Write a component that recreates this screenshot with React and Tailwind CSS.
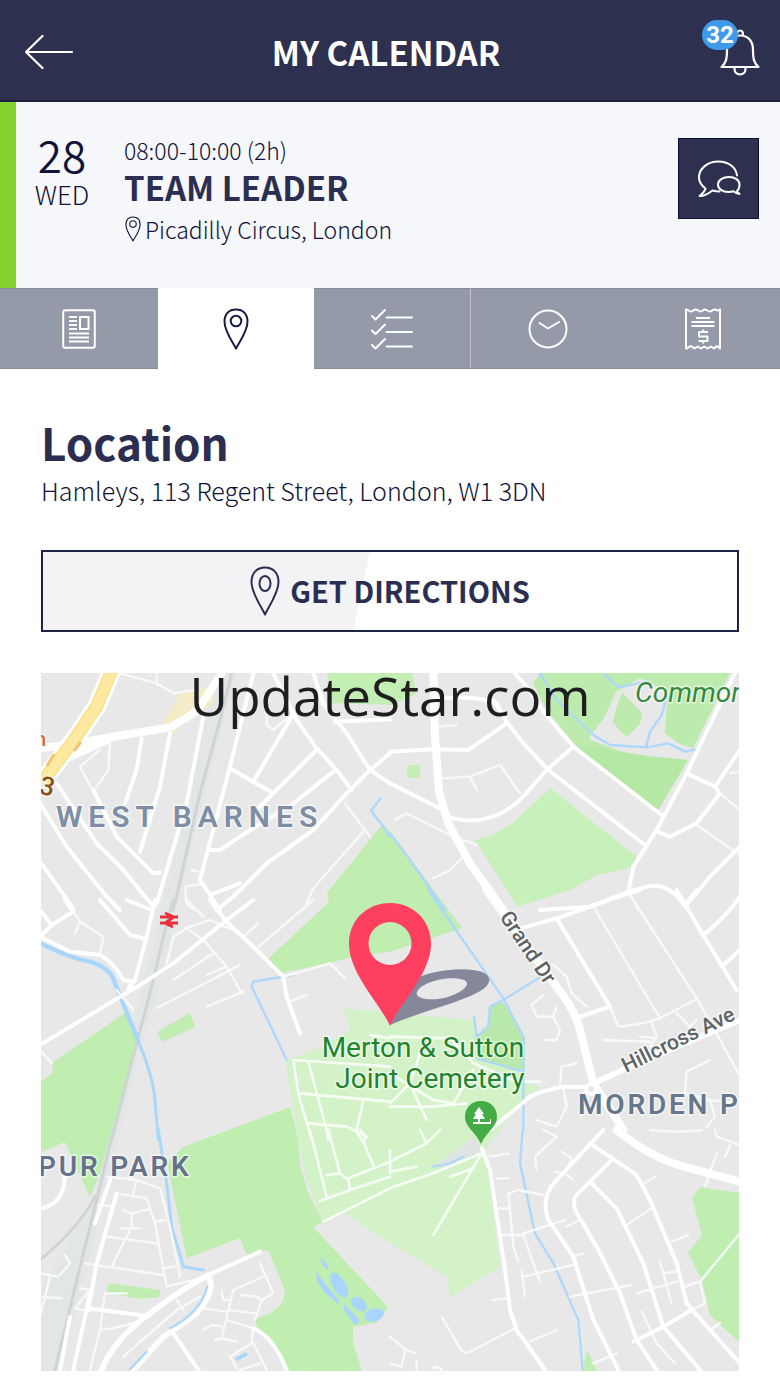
import React from "react";

const SANS = "font-['Noto_Sans_CJK_SC','Source_Sans_Pro',sans-serif]";

/* ---------- icons ---------- */

function ArrowLeftIcon() {
  return (
    <svg viewBox="0 0 50 36" className="h-9 w-[50px]" fill="none" stroke="currentColor" strokeWidth="2.2" strokeLinecap="round" strokeLinejoin="round" aria-hidden="true">
      <path d="M48 18H2M18.500 2L2 18L18.500 34" />
    </svg>
  );
}

function BellIcon() {
  return (
    <svg viewBox="0 0 40 48" className="h-12 w-10" fill="none" stroke="currentColor" strokeWidth="2.2" strokeLinejoin="round" aria-hidden="true">
      <path d="M17 8C16.500 4.500 18 2.500 20 2.500S23.500 4.500 23 8" />
      <path d="M20 7.500C11 7.500 7 14 7 22C7 31 6 35 1.500 39H38.500C34 35 33 31 33 22C33 14 29 7.500 20 7.500Z" />
      <path d="M14.500 39V41C14.500 44.500 17 46.500 20 46.500S25.500 44.500 25.500 41V39" />
    </svg>
  );
}

function PinIcon({ className, strokeWidth = 2 }) {
  return (
    <svg viewBox="0 0 26 42" className={className} fill="none" stroke="currentColor" strokeWidth={strokeWidth} strokeLinejoin="round" aria-hidden="true">
      <path d="M13 40.500C11 36 1.500 24 1.500 13.500C1.500 6 6 1.500 13 1.500S24.500 6 24.500 13.500C24.500 24 15 36 13 40.500Z" />
      <circle cx="13" cy="13" r="5.300" />
    </svg>
  );
}

function TallPinIcon() {
  return (
    <svg viewBox="0 0 30 50" className="h-[50px] w-[30px]" fill="none" stroke="currentColor" strokeWidth="2" strokeLinejoin="round" aria-hidden="true">
      <path d="M15 48.500C12 42 1.500 27 1.500 16C1.500 7 7 1.500 15 1.500S28.500 7 28.500 16C28.500 27 18 42 15 48.500Z" />
      <ellipse cx="15" cy="17.500" rx="5.500" ry="7.500" />
    </svg>
  );
}

function ChatIcon() {
  return (
    <svg viewBox="0 0 44 38" className="h-[38px] w-11" fill="none" stroke="currentColor" strokeWidth="2" strokeLinecap="round" strokeLinejoin="round" aria-hidden="true">
      <path d="M40 15.500C39 7 31 1.500 21.500 1.500C10.500 1.500 2 8.500 2 17.500C2 22 4.500 25.500 8.500 28.500C8 31.500 5 34 2.500 36C7 36.500 11 34 15.500 30.500C17.500 31 20 31.500 22.500 31.500" />
      <path d="M40 31C42 29.500 42.500 27 42.500 24.500C42.500 20 38 17 32 17S21 20 21 24.500S25.500 32 31.500 32C33.500 32 35 31.800 36.500 31.300C38.500 33 40.500 34 42.500 34C41.500 33 40.500 32.500 40 31Z" />
    </svg>
  );
}

function NewsIcon() {
  return (
    <svg viewBox="0 0 34 40" className="h-10 w-[34px]" fill="none" stroke="currentColor" strokeWidth="2" aria-hidden="true">
      <rect x="1.200" y="1.200" width="31.600" height="37.600" rx="2" />
      <path d="M7 8H15M7 12H15M7 16H15M7 20H15M7 24.500H27M7 28.500H27M7 32.500H27" />
      <rect x="18" y="8" width="8.500" height="12" />
    </svg>
  );
}

function ChecklistIcon() {
  return (
    <svg viewBox="0 0 42 42" className="h-[42px] w-[42px]" fill="none" stroke="currentColor" strokeWidth="2" strokeLinecap="round" strokeLinejoin="round" aria-hidden="true">
      <path d="M1 8L4.500 11.500L14 2M1 22.500L4.500 26L14 16.500M1 37L4.500 40.500L14 31" />
      <path d="M15.500 9.500H41M15.500 24H41M15.500 38.500H41" />
    </svg>
  );
}

function ClockIcon() {
  return (
    <svg viewBox="0 0 40 40" className="h-10 w-10" fill="none" stroke="currentColor" strokeWidth="2" strokeLinecap="round" strokeLinejoin="round" aria-hidden="true">
      <circle cx="20" cy="20" r="18.500" />
      <path d="M11.500 14L20 19.500L31 13" />
    </svg>
  );
}

function ReceiptIcon() {
  return (
    <svg viewBox="0 0 36 42" className="h-[42px] w-9" fill="none" stroke="currentColor" strokeWidth="2" strokeLinejoin="round" aria-hidden="true">
      <path d="M1 1.500C3 1 4 3.500 6 3.500S9 1 11 1.500S14 3.500 16 3.500S18 1.200 20 1.500S23 3.500 25 3.500S28 1 30 1.500S33 3.500 35 1.500V40.500L32 38L29 40.500L26 38.500L22.500 40.500L19.500 38.500L16 40.500L12.500 38.500L9.500 40.500L6 38L1 40.500Z" />
      <path d="M11 10H25M6.500 14H29.500M6.500 18H29.500" />
      <path d="M23 24H14V28.500H22.500V33H13.500M18.200 21.500V24M18.200 33V35.500" />
    </svg>
  );
}

/* ---------- map ---------- */

const PARKS = [
  ["#c0edb0", "M382 825L327 893L329 902L267 960L280 973L306 968L350 958L392 951L462 928L447 908L390 831Z"],
  ["#c3eeb4", "M327 673H412L416 694L392 705L332 703Z"],
  ["#bdebad", "M541 673L533 683L547 711L577 747L657 812L663 802L687 760L730 673Z"],
  ["#e8e8e8", "M590 737L604 718L616 692L630 684L640 678L664 690L667 703L665 733L678 743L692 748L688 760L650 756L623 752L590 740Z"],
  ["#bdebad", "M622 692L642 713L640 724L627 737L620 731L613 722L617 706Z"],
  ["#b5e8a4", "M577 747L600 748L650 757L688 760L663 802L657 812Z"],
  ["#c8f0bb", "M550 788L637 857L630 868L597 875L570 890L517 907L505 887L475 840L493 835L513 823Z"],
  ["#c6efb8", "M407 765H420V778H407Z"],
  ["#c0edb0", "M157 1032L190 1013L195 1027L162 1042Z"],
  ["#c0edb0", "M125 1013L52 1063L53 1072L41 1082V1152L65 1142L90 1197L100 1173L112 1130L138 1043Z"],
  ["#d3f2c8", "M343 1008L390 1013L475 1020L478 1035L523 1040L525 1083L542 1087L526 1095L485 1150L490 1180L500 1267L450 1297L447 1277L390 1243L342 1212L323 1222L307 1180L298 1138L285 1060L323 1047L350 1030Z"],
  ["#c0edb0", "M183 1147L207 1138L290 1107L298 1138L300 1165L307 1190L323 1222L313 1227L388 1307L377 1322L353 1327L353 1343L362 1371H287L280 1353L257 1327L255 1318Q285 1312 285 1290L268 1250L247 1255L240 1238L187 1258L167 1163Z"],
  ["#b9e9aa", "M490 1005L503 1002L525 1037L525 1070L477 1060L475 1037L487 1027Z"],
  ["#e0e3e3", "M432 1168L473 1137L484 1152Z"],
  ["#c0edb0", "M108 1283L160 1290V1297L140 1299L107 1293Z"],
  ["#c0edb0", "M692 1198L700 1187L739 1193V1342L710 1315L702 1280L688 1253L702 1235Z"],
  ["#c0edb0", "M587 1350L597 1371H583Z"],
];

/* Each sheet holds strokes drawn on a grid three times finer than the map. */
const SHEETS = [
  {
    at: "translate(40 670) scale(0.33333)",
    rail: ["M575 10L540 150L480 370L400 720"],
    water: ["M1022 385L993 422L1030 470L1050 500"],
    wide: ["M0 235L80 225L250 195L390 172L470 125L545 10", "M80 265L200 210"],
    main: [
      "M700 10L770 150L830 235L890 300L935 360", "M820 10L850 100L920 190L990 300L1050 340", "M1050 250L985 305L920 370L820 480L680 580L580 680L530 720",
      "M640 10L570 290L480 630L540 720", "M490 140L440 400L350 700", "M0 400L80 530L200 680L240 720", "M50 340L170 520L250 600L340 710", "M0 575L100 715",
      "M880 305L760 400L600 500L540 540H505", "M830 240L720 350L640 430", "M570 295L700 370", "M885 155L1050 148",
      "M755 140L640 335", "M160 360L230 500L340 610L360 608", "M305 205L290 300L255 400", "M390 190L360 350L300 545", "M600 640L510 675",
    ],
    thin: ["M240 10L350 40L400 70L470 60M350 10V45", "M210 215L205 300L160 365L120 290L180 240", "M915 400L990 500", "M680 120V165L700 180L760 130", "M970 485L820 655L790 720", "M455 600L475 605M490 640L435 650L440 700L460 720"],
  },
  {
    at: "translate(390 670) scale(0.33333)",
    water: ["M450 10L500 90L610 195L660 225L770 232L835 220L885 245L920 238", "M640 10L685 52L770 35M830 80L815 135L780 185L768 230", "M0 490L60 570L165 720"],
    wide: ["M130 10L135 200L148 370L175 460L240 580L340 720"],
    main: [
      "M375 10L410 50L460 125L550 230L815 435", "M1035 10L1010 60L890 310L800 480L730 590L715 665", "M0 245L130 238L235 240L350 160", "M550 230L470 300L400 380Q300 480 170 440", "M310 90L350 155L400 220L475 300L765 525",
      "M0 340L160 420", "M150 85Q260 75 320 100L350 155", "M890 310L975 350L1050 240M975 350L990 370L920 460L840 500L800 485", "M1050 530L960 620L885 710", "M450 720L600 710L715 665L780 648Q840 640 885 710",
    ],
    thin: ["M150 170L200 165M160 325L240 320L260 360M240 320L330 285L390 370", "M15 450L50 430L180 495L260 525", "M215 565L180 600L130 625", "M920 465L1050 555M990 370L1050 420", "M720 670L745 720M1050 305L1020 310"],
  },
  {
    at: "translate(40 900) scale(0.33333)",
    rail: ["M400 0L370 110L340 240L290 430L215 720"],
    water: ["M760 225L640 245L635 260L740 480"],
    river: ["M5 132Q90 175 150 185Q215 205 225 250L290 410"],
    main: ["M0 110L90 155L180 165Q220 185 250 240L280 245", "M0 435L150 345L300 255L400 190L560 60L640 0", "M345 0L320 110L285 240L265 265", "M510 0L560 65L650 150L730 230L740 290L780 400", "M180 0L270 105L310 115M260 0L335 30", "M0 30L35 75L100 35L75 0M35 75L0 110"],
    thin: ["M100 35L120 65L190 110L180 160M120 65L105 100", "M440 0L490 50M440 85L400 110L380 190M440 85L490 120L560 200L605 280", "M435 85L510 60L600 100", "M560 200L500 225", "M400 240L520 160M350 325L600 195M500 320L610 275", "M650 145L820 0M610 110L655 70", "M730 230L870 190L915 235M750 305L800 285M230 270L280 330M0 450L35 490"],
    path: ["M760 480L1050 500M760 480L775 580L815 720M805 485L860 690L865 720M780 580L1050 605M805 670L920 680L980 710M970 600L950 690M990 405L1050 415"],
    brook: ["M290 410Q335 520 343 580L355 720"],
  },
  {
    at: "translate(390 890) scale(0.33333)",
    water: ["M115 0L340 325L400 440V720", "M450 262L340 330L300 350L295 410L260 440L252 380M260 505L400 545"],
    wide: ["M290 0L390 140L500 290Q555 360 570 420L610 580L700 720"],
    avenue: ["M610 580L720 530L1050 390"],
    main: ["M390 115L500 85L715 10L750 0M500 85L660 350L570 380M860 0L930 120L1040 300M885 45L920 0M940 135Q1010 80 1050 20M1000 225L1050 180", "M600 590L520 590Q460 600 420 620L300 720"],
    thin: ["M610 50L810 385M720 15L920 325L985 440L1045 550M660 350L685 410Q770 400 810 385L915 330", "M490 225L530 260L545 310L590 350M460 315L425 345L440 380L490 380L510 420L500 450L460 450M490 380L500 350", "M785 400L800 440L780 470M750 440L800 445M860 370L900 410L920 390M640 450L780 455", "M560 520L515 530L510 585M520 595L530 650L500 710L440 690", "M960 510L890 545L885 610L960 630L1040 640M960 630L975 680L950 710"],
    path: ["M0 440L180 445L250 520L380 575H450M100 460L60 580L0 640M0 550L130 630L190 640M190 640L250 540M60 580L110 690M0 650L130 650L230 640"],
  },
  {
    at: "translate(40 1130) scale(0.33333)",
    rail: ["M220 0L175 190L130 370L45 720", "M0 390Q120 290 165 200"],
    brook: ["M355 0L380 160L395 290L430 410L490 420"],
    avenue: ["M505 435Q530 480 470 550Q420 590 370 620L280 720", "M505 435Q420 480 330 550Q220 630 185 720"],
    overwater: ["M502 470Q480 550 390 595M320 665L270 718"],
    main: ["M505 435L660 365", "M0 235Q75 225 75 130", "M145 535L320 558M210 150L165 280M150 490L100 720M400 610L475 720", "M640 595Q700 620 740 720", "M230 190L170 400L145 540", "M90 560L60 720"],
    thin: [
      "M200 140L290 150L360 175L390 290L420 440M290 150L280 190M230 190L320 205L345 280L380 470L500 440", "M200 320L350 340M345 275L375 270M175 225L220 230", "M250 240L275 250L325 238M275 250V290L235 370M240 295H300M215 410L240 360", "M135 400L370 435M370 415L405 410", "M180 600Q270 590 330 560M195 490L180 600L150 720M195 490H260M120 475L150 480L105 535L150 545",
      "M0 430L55 440L90 400L75 375M30 440L0 560M0 500L65 505", "M480 500L410 540L250 680", "M660 400L700 490L665 510L645 570M670 440L580 480L545 625L590 635M525 630L545 625M545 485L550 510H570M605 495L650 500L665 510M565 540L645 550M560 570L640 595L635 640L570 680L590 715M490 535L560 545M490 600L515 585L550 590M640 640L680 720M410 510L430 540M600 720L660 700",
    ],
    path: ["M810 0L860 200M865 0L900 130L860 135M840 213L930 180L1050 140M850 275L1050 175M900 130L925 150L930 180M925 145L1050 95M945 0L970 35L1000 105M960 0Q985 20 970 35"],
  },
  {
    at: "translate(390 1130) scale(0.33333)",
    water: ["M398 0L390 100L435 310L490 400L565 570L578 720", "M130 110L180 100L220 80"],
    wide: ["M680 0Q790 90 900 115L1050 155"],
    main: [
      "M275 55L300 120L345 420L360 540L380 600L465 720", "M640 0L500 150Q450 200 475 270L550 380L610 570L685 720", "M600 40L740 135L780 210L860 400L890 520L960 600L1050 700", "M660 95L555 200Q545 230 570 265L620 350L690 490L740 630L800 720", "M600 155L680 235L760 400L820 590L930 720", "M905 540L820 590L730 635",
    ],
    thin: [
      "M155 560L210 655Q225 675 240 665L375 595M420 635L500 600M310 510L350 505M320 145H355M300 80L355 70M320 235H355", "M355 190L370 350L385 395M355 190L385 180L460 195M335 315H400L450 455M400 310L525 270M530 290L570 270M395 420L405 500M400 440L550 405M540 500L725 465M740 490L860 455M550 380L580 370M710 285L785 235M845 335L895 315M765 160L795 140M810 395L845 520M820 430L855 425M755 545L800 640L855 700M610 700L680 670", "M885 470L930 455L1050 310M930 455L945 520L905 540M960 600L990 580",
      "M460 0L500 20L435 80L440 120M515 65L545 85L525 130L550 150M520 130L495 125", "M780 0Q870 10 935 0M975 0L980 20L1050 45M1020 45L1005 80M980 70L945 170", "M0 620L50 660L75 670M45 660L35 710L0 700M80 690V720M130 715Q145 705 155 720",
    ],
    path: ["M0 175L140 125L275 70L130 315M180 140L250 115M0 95L110 40L150 0M110 40L90 0M0 125L80 110M0 60V130"],
  },
];

const STROKES = [
  ["rail", "#d0d4d6", 9],
  ["path", "#f7fcf5", 8],
  ["water", "#aed8fb", 7],
  ["brook", "#a9d8fb", 9],
  ["river", "#a6d6fb", 13],
  ["thin", "#f8f9f9", 7],
  ["main", "#ffffff", 12],
  ["avenue", "#ffffff", 17],
  ["wide", "#ffffff", 24],
  ["overwater", "#aed8fb", 7],
];

function CityMap() {
  return (
    <svg viewBox="41 673 698 698" className="block h-auto w-full bg-[#e8e8e8] font-['Roboto',sans-serif]" role="img" aria-label="Map around Merton & Sutton Joint Cemetery">
      <rect x="41" y="673" width="698" height="698" fill="#e8e8e8" />
      <path d="M217 673H236L195 830L155 1000L137 1060L105 1200L60 1371H41V1290L95 1195L127 1045L160 915Z" fill="#e3e6e6" />
      {PARKS.map(([fill, d]) => (
        <path key={d} d={d} fill={fill} />
      ))}
      <path d="M180 693L198 688L208 702L188 716L173 736L164 722Z M200 690L217 683L212 705L200 712Z" fill="#f4ecc6" />
      {STROKES.map(([kind, color, width]) => (
        <g key={kind} fill="none" stroke={color} strokeWidth={width} strokeLinecap="round" strokeLinejoin="round">
          {SHEETS.map((sheet) => (
            <g key={sheet.at} transform={sheet.at}>
              {(sheet[kind] || []).map((d) => (
                <path key={d} d={d} />
              ))}
            </g>
          ))}
        </g>
      ))}

      <g fill="none" strokeLinejoin="round">
        <path d="M112 670L97 706L74 740L42 782" stroke="#ffffff" strokeWidth="19" />
        <path d="M112 670L97 706L74 740L42 782" stroke="#f9e08a" strokeWidth="13" />
        <path d="M112 670L97 706L74 740L42 782" stroke="#fdeaa0" strokeWidth="10" />
        <path d="M81 742L74 751M54 754L47 766" stroke="#edc873" strokeWidth="3" />
      </g>

      <g fill="#a9d5fc">
        <path d="M320 1256L329 1267L328 1270L323 1266Z" />
        <path d="M316 1271L326 1285L339 1300V1304L326 1294L317 1282Z" />
        <ellipse cx="339" cy="1285" rx="6.500" ry="14" transform="rotate(-30 339 1285)" />
        <path d="M343 1303L360 1320L357 1324H354L344 1310Z" />
        <ellipse cx="359" cy="1304" rx="9" ry="6" transform="rotate(40 359 1304)" />
        <ellipse cx="374" cy="1315" rx="10" ry="6.500" transform="rotate(-18 374 1315)" />
        <path d="M235 1358L246 1352L248 1355L237 1361Z" />
      </g>

      <g fill="none" stroke="#ffffff" strokeWidth="4">
        <circle cx="591" cy="1089" r="5" fill="#e8e8e8" />
      </g>

      <g fill="none" stroke="#e8303c" strokeWidth="2.800">
        <path d="M160 917H178M160 923H178M165 913L174 917L165 923L173 927" />
      </g>

      <g stroke="#ffffff" strokeOpacity="0.6" strokeWidth="3" strokeLinejoin="round" paintOrder="stroke">
        <text x="35" y="746" fontSize="20" fontWeight="500" fill="#c96f35">n</text>
        <text x="40" y="794" fontSize="26" fontWeight="500" fill="#8a5218" transform="rotate(12 42 785)">3</text>
        <text x="56" y="827" fontSize="30" fontWeight="600" fill="#7e8ea5" className="tracking-[0.2em]">WEST BARNES</text>
        <text x="578" y="1114" fontSize="28" fontWeight="600" fill="#66778b" className="tracking-widest">MORDEN P</text>
        <text x="38" y="1176" fontSize="28" fontWeight="600" fill="#66718a" className="tracking-widest">PUR PARK</text>
        <text x="635" y="702" fontSize="28" fontStyle="italic" fill="#35893f">Common</text>
        <text x="423" y="1057" textAnchor="middle" fontSize="28" fill="#1e852c">Merton &amp; Sutton</text>
        <text x="430" y="1088" textAnchor="middle" fontSize="28" fill="#1e852c">Joint Cemetery</text>
        <text x="499" y="917" fontSize="21" fontWeight="500" fill="#5d6266" transform="rotate(56 499 917)">Grand Dr</text>
        <text x="626" y="1073" fontSize="21" fontWeight="500" fill="#5d6266" transform="rotate(-26 626 1073)">Hillcross Ave</text>
      </g>

      <g>
        <path d="M481 1101C491 1101 497 1108 497 1117C497 1127 487 1131 481 1144C475 1131 465 1127 465 1117C465 1108 471 1101 481 1101Z" fill="#45ab45" />
        <path d="M479 1107L484 1114H482L485 1119H480V1122H490V1119H491V1124H473V1122H478V1119H473L476 1114H474Z" fill="#ffffff" />
      </g>

      <path fillRule="evenodd" fill="#85889b" d="M390 1025L414 979C432 970 466 966 482 972C497 979 487 990 468 997C446 1006 415 1014 390 1025ZM417 992C414 1000 434 1001 448 997C463 992 472 984 464 980C451 975 422 981 417 992Z" />
      <path fillRule="evenodd" fill="#ff3f60" d="M390 1026C382 1006 349 974 349 944C349 920 367 903 390 903S431 920 431 944C431 974 398 1006 390 1026ZM390 922A21.500 21.500 0 1 0 390 965A21.500 21.500 0 1 0 390 922Z" />
    </svg>
  );
}

/* ---------- page ---------- */

const TABS = [
  { label: "Details", icon: <NewsIcon /> },
  { label: "Location", icon: <PinIcon className="h-[42px] w-[26px]" />, active: true },
  { label: "Checklist", icon: <ChecklistIcon /> },
  { label: "Hours", icon: <ClockIcon />, divided: true },
  { label: "Expenses", icon: <ReceiptIcon /> },
];

export default function App() {
  return (
    <div className={`${SANS} min-h-screen bg-white text-[#2b2e50]`}>
      <header className="grid h-[102px] grid-cols-[1fr_auto_1fr] items-center border-b-2 border-[#1b1d3b] bg-[#2d314f] px-5 text-white">
        <button type="button" aria-label="Back" className="justify-self-start px-1 pt-3 pb-2">
          <ArrowLeftIcon />
        </button>
        <h1 className="pt-1 pr-2 text-[33px] leading-10 font-bold">MY CALENDAR</h1>
        <button type="button" aria-label="Notifications, 32 unread" className="relative justify-self-end pt-1 pl-3">
          <BellIcon />
          <span className="absolute -top-1 -left-1.5 flex h-[30px] w-9 items-center justify-center rounded-full bg-[#3f9be9] font-['Roboto',sans-serif] text-2xl font-bold">
            32
          </span>
        </button>
      </header>

      <section className="flex items-start border-l-16 border-[#86d030] bg-[#f5f7fa] pt-8 pr-[21px] pb-[41px] text-[#10123a]">
        <div className="w-[92px] text-center">
          <p className="text-[44px] leading-10 font-[350]">28</p>
          <p className="text-[26px] leading-10 font-light">WED</p>
        </div>
        <div className="grow pt-0.5 pl-4">
          <p className="text-[23px] leading-7 font-light">08:00-10:00 (2h)</p>
          <h2 className="text-[33px] leading-[47px] font-bold text-[#2b2e50]">TEAM LEADER</h2>
          <p className="flex items-center gap-1 text-[23px] leading-9 font-light">
            <PinIcon className="ml-px h-[26px] w-4" strokeWidth={1.8} />
            Picadilly Circus, London
          </p>
        </div>
        <button type="button" aria-label="Messages" className="mt-1 flex size-[81px] items-center justify-center border border-[#0e1138] bg-[#2d314f] text-white">
          <ChatIcon />
        </button>
      </section>

      <nav className="grid grid-cols-[158fr_156fr_156fr_155fr_155fr]">
        {TABS.map((tab) => (
          <button
            key={tab.label}
            type="button"
            aria-label={tab.label}
            className={`flex h-[81px] items-center justify-center ${
              tab.active ? "bg-white text-[#1a1c45]" : "border-y border-[#858a99] bg-[#959aa8] text-white"
            } ${tab.divided ? "border-l border-l-[#bfc2cb]" : ""}`}
          >
            {tab.icon}
          </button>
        ))}
      </nav>

      <main className="px-[41px] pt-[46px] pb-4">
        <h2 className="text-[44px] leading-[55px] font-bold">Location</h2>
        <p className="text-[25px] leading-10 font-light text-[#10123a]">Hamleys, 113 Regent Street, London, W1 3DN</p>
        <button
          type="button"
          className="mt-10 flex h-[82px] w-full items-center justify-center gap-2.5 border-2 border-[#1f2247] bg-[linear-gradient(102deg,#f3f3f6_46%,#ffffff_46%)] text-[29px] font-bold"
        >
          <TallPinIcon />
          GET DIRECTIONS
        </button>
        <div className="relative mt-[41px]">
          <CityMap />
          <p className="absolute inset-x-0 top-0 text-center font-['Open_Sans',sans-serif] text-[53px] leading-[46px] text-[#1e1e1e]">UpdateStar.com</p>
        </div>
      </main>
    </div>
  );
}
